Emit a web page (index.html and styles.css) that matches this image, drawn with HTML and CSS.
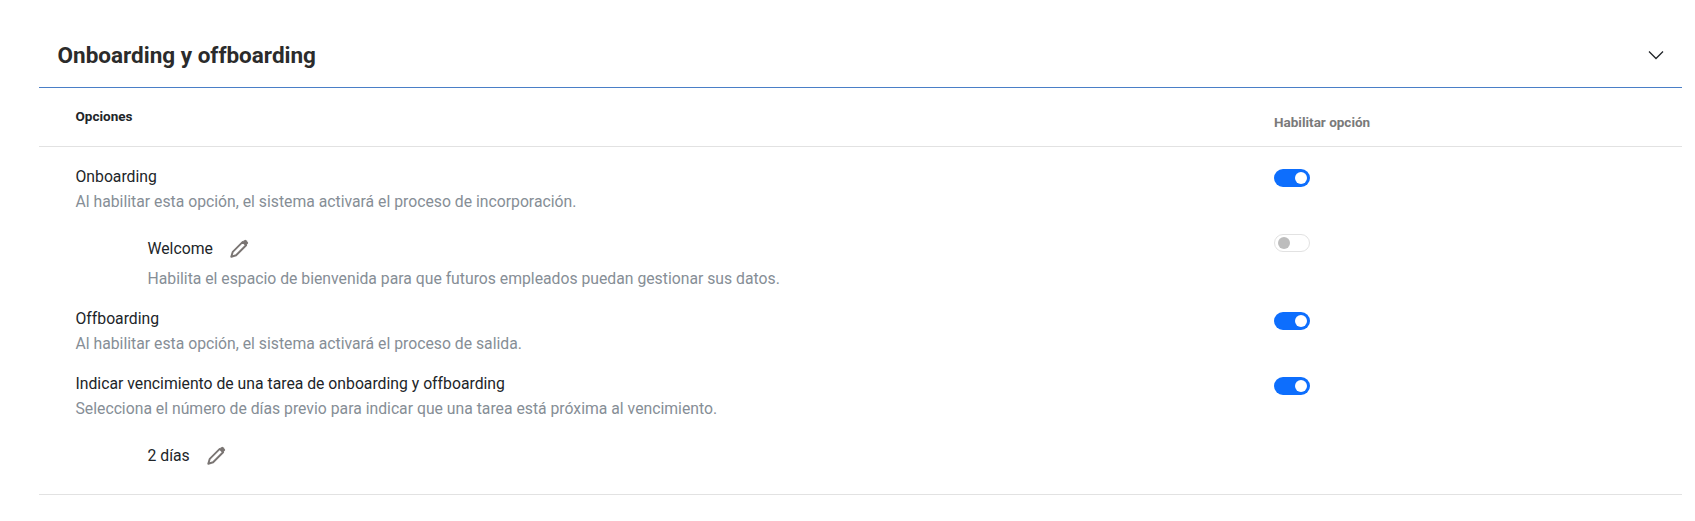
FILE: index.html
```html
<!DOCTYPE html>
<html lang="es">
<head>
  <meta charset="UTF-8">
  <title>Onboarding y offboarding</title>
  <link rel="stylesheet" href="styles.css">
</head>
<body>
  <div class="panel">
    <div class="panel-head">
      <h2>Onboarding y offboarding</h2>
      <svg class="chevron" width="16" height="16" viewBox="0 0 16 16"><path d="M1 4.5l7 7 7-7" fill="none" stroke="#212529" stroke-width="1.3"/></svg>
    </div>

    <div class="table-head">
      <div class="col-options">Opciones</div>
      <div class="col-enable">Habilitar opción</div>
    </div>

    <div class="table-body">
      <div class="row row-onboarding">
        <div class="col-main">
          <div class="title">Onboarding</div>
          <div class="desc">Al habilitar esta opción, el sistema activará el proceso de incorporación.</div>
        </div>
        <div class="col-toggle"><span class="switch on"></span></div>
      </div>

      <div class="row row-welcome">
        <div class="col-main sub">
          <div class="title with-icon">Welcome
            <svg class="pencil" width="20" height="20" viewBox="0 0 16 16"><path d="M1.8 14.2l1.2-3.9 8-8 2.7 2.700-8 8z" fill="none" stroke="#7a7573" stroke-width="1.5" stroke-linejoin="round"/><path d="M11 2.300l1.300-1.300a1 1 0 0 1 1.400 0l1.300 1.300a1 1 0 0 1 0 1.400l-1.300 1.300z" fill="#7a7573"/></svg>
          </div>
          <div class="desc">Habilita el espacio de bienvenida para que futuros empleados puedan gestionar sus datos.</div>
        </div>
        <div class="col-toggle"><span class="switch off"></span></div>
      </div>

      <div class="row row-offboarding">
        <div class="col-main">
          <div class="title">Offboarding</div>
          <div class="desc">Al habilitar esta opción, el sistema activará el proceso de salida.</div>
        </div>
        <div class="col-toggle"><span class="switch on"></span></div>
      </div>

      <div class="row row-expiry">
        <div class="col-main">
          <div class="title">Indicar vencimiento de una tarea de onboarding y offboarding</div>
          <div class="desc">Selecciona el número de días previo para indicar que una tarea está próxima al vencimiento.</div>
          <div class="title with-icon days">2 días
            <svg class="pencil" width="20" height="20" viewBox="0 0 16 16"><path d="M1.8 14.2l1.2-3.9 8-8 2.7 2.700-8 8z" fill="none" stroke="#7a7573" stroke-width="1.5" stroke-linejoin="round"/><path d="M11 2.300l1.300-1.300a1 1 0 0 1 1.400 0l1.300 1.300a1 1 0 0 1 0 1.400l-1.300 1.300z" fill="#7a7573"/></svg>
          </div>
        </div>
        <div class="col-toggle"><span class="switch on"></span></div>
      </div>
    </div>
  </div>
</body>
</html>
```

FILE: styles.css
```css
* { box-sizing: border-box; }
body { margin: 0; background: #fff; font-family: Roboto, "Liberation Sans", sans-serif; color: #212529; }
.panel { margin: 0 13px 0 39px; padding-top: 28px; }
.panel-head { height: 60px; padding: 0 18px 6px 18.5px; display: flex; align-items: center; justify-content: space-between; border-bottom: 1px solid #4a7fc7; }
.panel-head h2 { margin: 0; font-size: 22.5px; font-weight: 700; line-height: 28px; color: #2b2b2b; }
.table-head { height: 59px; display: flex; border-bottom: 1px solid #e2e2e2; font-size: 13.5px; font-weight: 700; line-height: 16px; }
.col-options { width: 1235px; padding: 20px 0 0 36.5px; color: #212529; }
.col-enable { padding-top: 26px; color: #7a7a7a; }
.row { display: flex; }
.col-main { width: 1235px; padding-left: 36.5px; flex: none; }
.col-main.sub { padding-left: 108.5px; }
.title { font-size: 15.75px; line-height: 20px; color: #212529; }
.desc { font-size: 15.75px; line-height: 20px; color: #868e96; margin-top: 5px; }
.with-icon { display: flex; align-items: center; gap: 16px; }
.row-onboarding { padding-top: 20px; height: 73px; }
.row-onboarding .col-toggle { padding-top: 2px; }
.row-welcome { height: 80px; padding-top: 17px; }
.row-welcome .with-icon { height: 24px; }
.row-welcome .desc { margin-top: 8px; }
.row-welcome .col-toggle { margin-top: -3px; }
.row-offboarding { height: 65px; }
.row-offboarding .col-toggle { padding-top: 12px; }
.row-offboarding .title { padding-top: 9px; height: 29px; }
.row-expiry { height: 129px; }
.row-expiry .title:first-child { padding-top: 9px; height: 29px; }
.row-expiry .col-toggle { padding-top: 12px; }
.days { margin: 25px 0 0 72px; height: 24px; }
.col-toggle { flex: none; }
.switch { display: block; width: 36px; height: 18px; border-radius: 9px; position: relative; }
.switch::after { content: ""; position: absolute; top: 3px; width: 12px; height: 12px; border-radius: 50%; }
.switch.on { background: #0d6efd; }
.switch.on::after { right: 3px; background: #fff; }
.switch.off { background: #fff; border: 1px solid #e2e2e2; }
.switch.off::after { left: 3px; top: 2px; background: #bdbdbd; }
.table-body { border-bottom: 1px solid #e2e2e2; }
```
